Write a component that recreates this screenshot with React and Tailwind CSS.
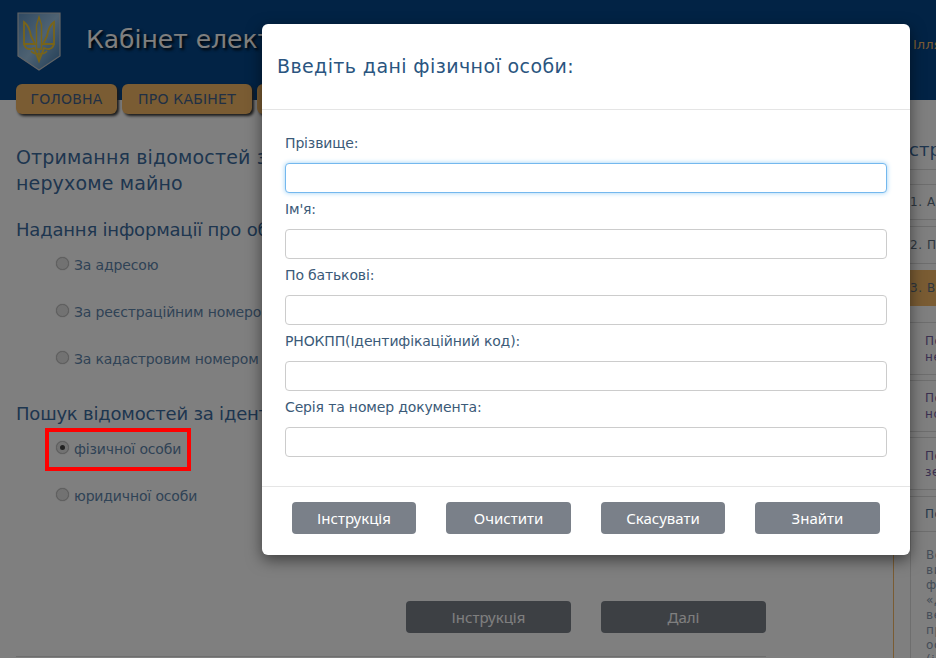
const Trident = () => (
  <svg width="44" height="59" viewBox="0 0 44 59" className="shrink-0">
    <defs>
      <linearGradient id="shield" x1="0" y1="0" x2="1" y2="1">
        <stop offset="0" stopColor="#5f93c4" />
        <stop offset="0.5" stopColor="#9cc4e4" />
        <stop offset="1" stopColor="#3f79ad" />
      </linearGradient>
    </defs>
    <path d="M1 1H43V44L22 58L1 44Z" fill="url(#shield)" stroke="#c4c8cc" strokeWidth="1.2" />
    <g fill="none" stroke="#f0c832" strokeWidth="1.8">
      <path d="M22 5L24.5 13V37H19.5V13Z" strokeWidth="1.4" />
      <path d="M7 10V32H18L14 24C13 18 11 13 7 10Z" />
      <path d="M37 10V32H26L30 24C31 18 33 13 37 10Z" />
      <path d="M7 32C9 39 15 37 17 36L22 49L27 36C29 37 35 39 37 32" />
      <path d="M14 39C17 43 27 43 30 39M22 37V49" strokeWidth="1.3" />
    </g>
  </svg>
)

const Radio = ({ checked }) => (
  <span className="w-[13px] h-[13px] -mt-[3px] rounded-full border border-[#c0c0c0] bg-[#e4e4e4] flex items-center justify-center shrink-0 shadow-[0_0_1px_#999]">
    {checked && <span className="w-[5px] h-[5px] rounded-full bg-[#444]" />}
  </span>
)

const RadioRow = ({ label, checked, className }) => (
  <div className={`flex items-center gap-[5px] pl-[56px] text-[14px] tracking-[-0.15px] text-[#5f86ac] ${className}`}>
    <Radio checked={checked} />
    <span className="whitespace-nowrap">{label}</span>
  </div>
)

const Field = ({ label, focused }) => (
  <div className="flex flex-col h-[66px]">
    <label className="h-[33px] pt-[3px] leading-[20px] text-[14px] tracking-[-0.15px] text-[#3b5a78]">{label}</label>
    <input
      className={`h-[30px] rounded-[4px] border bg-white ${
        focused ? 'border-[#74b8ee] shadow-[0_0_5px_#9bd0f5]' : 'border-[#ccc]'
      }`}
    />
  </div>
)

const ModalButton = ({ label, className }) => (
  <button className={`h-[32px] rounded-[4px] bg-[#7a8089] text-white text-[15px] font-['Noto_Sans',sans-serif] ${className}`}>
    {label}
  </button>
)

const tabs = [
  { label: 'ГОЛОВНА', width: 'w-[101px]' },
  { label: 'ПРО КАБІНЕТ', width: 'w-[130px]' },
  { label: 'ПОСЛУГИ', width: 'w-[100px]' },
]

// heights and gaps follow the strip visible to the right of the modal
const sideRows = [
  { lines: ['1. Авторизація'], box: 'h-[36px] mt-[14px] pl-[16px] text-[#5c6f80]' },
  { lines: ['2. Перевірка'], box: 'h-[38px] mt-[6px] pl-[16px] text-[#5c6f80]' },
  { lines: ['3. Вибір послуги'], box: 'h-[36px] mt-[6px] pl-[16px] bg-[#f4b866] border-[#f4b866] text-[#5c6f80]' },
  { lines: ['Пошук за адресою', 'нерухомого майна'], box: 'h-[53px] mt-[16px] pl-[31px] text-[#75609f]' },
  { lines: ['Пошук за реєстраційним', 'номером'], box: 'h-[52px] mt-[5px] pl-[31px] text-[#75609f]' },
  { lines: ['Пошук за кадастровим', 'земельної ділянки'], box: 'h-[53px] mt-[5px] pl-[31px] text-[#75609f]' },
  { lines: ['Пошук'], box: 'h-[36px] mt-[6px] pl-[31px] text-[#4a6f94]' },
]

const paragraph = ['Воно', 'визначає', 'фізичної', '«Далі»', 'веде', 'правa', 'особи', '(ідент']

export default function App() {
  return (
    <div className="relative w-[936px] h-[658px] overflow-hidden bg-white font-['DejaVu_Sans',sans-serif]">
      {/* Header */}
      <div className="h-[100px] bg-[#04468a] flex items-start pl-[17px] pt-[12px]">
        <Trident />
        <h1 className="ml-[25px] mt-[10px] text-[25px] leading-[36px] text-white whitespace-nowrap [text-shadow:2px_2px_3px_#000]">
          Кабінет електронних сервісів
        </h1>
        <span className="absolute left-[913px] top-[35px] text-[13px] text-[#f4b866]">Ілляшенко</span>
      </div>

      {/* Nav */}
      <div className="absolute left-[16px] top-[84px] flex gap-[5px]">
        {tabs.map(({ label, width }) => (
          <div
            key={label}
            className={`${width} h-[30px] flex items-center justify-center rounded-[6px] bg-[#f4b866] text-[14px] tracking-[0.2px] text-[#42618a] shadow-[2px_2px_3px_#333]`}
          >
            {label}
          </div>
        ))}
      </div>

      <div className="flex">
        {/* Main column */}
        <div className="w-[894px] shrink-0 pl-[16px] pt-[44px] border-r border-[#f4b866] h-[558px]">
          <h2 className="text-[19px] leading-[26px] tracking-[0.15px] text-[#3c6c9f] whitespace-nowrap">
            Отримання відомостей з реєстру прав на
            <br />
            нерухоме майно
          </h2>
          <h3 className="mt-[21px] text-[18px] leading-[26px] tracking-[-0.2px] text-[#3c6c9f] whitespace-nowrap">
            Надання інформації про об'єкт
          </h3>
          <div className="-ml-[16px]">
            <RadioRow className="mt-[10px] h-[24px]" label="За адресою" />
            <RadioRow className="mt-[23px] h-[24px]" label="За реєстраційним номером об'єкта" />
            <RadioRow className="mt-[23px] h-[24px]" label="За кадастровим номером земельної ділянки" />
          </div>
          <h3 className="mt-[30px] text-[18px] leading-[26px] tracking-[-0.2px] text-[#3c6c9f] whitespace-nowrap">
            Пошук відомостей за ідентифікатором
          </h3>
          <div className="-ml-[16px]">
            <div className="relative mt-[10px]">
              <RadioRow className="h-[24px]" label="фізичної особи" checked />
              <div className="absolute left-[45px] -top-[9px] w-[146px] h-[43px] border-[4px] border-[#ff0000] z-20" />
            </div>
            <RadioRow className="mt-[23px] h-[24px]" label="юридичної особи" />
          </div>
          <div className="mt-[93px] flex gap-[30px] pl-[390px]">
            <ModalButton className="w-[165px]" label="Інструкція" />
            <ModalButton className="w-[165px]" label="Далі" />
          </div>
          <div className="mt-[23px] w-[750px] border-t border-[#ddd]" />
        </div>

        {/* Sidebar */}
        <div className="w-[120px] shrink-0 pt-[36px] text-[12px] tracking-[0.6px]">
          <h3 className="h-[34px] leading-[28px] text-[18px] tracking-normal -ml-[2px] border-b border-[#ddd] whitespace-nowrap text-[#3c6c9f]">
            Інструкція
          </h3>
          {sideRows.map(({ lines, box }) => (
            <div key={lines[0]} className={`${box} flex flex-col justify-center border-y border-[#ddd] leading-[16px] whitespace-nowrap`}>
              {lines.map((line) => (
                <div key={line}>{line}</div>
              ))}
            </div>
          ))}
          <div className="ml-[16px] border-l border-[#ddd] pl-[15px] pt-[16px] h-[200px] leading-[15px] whitespace-nowrap text-[#8a9bb0]">
            {paragraph.map((line) => (
              <div key={line}>{line}</div>
            ))}
          </div>
        </div>
      </div>

      {/* Overlay and modal */}
      <div className="absolute inset-0 bg-black/50 pl-[262px] pt-[24px] z-10">
        <div className="w-[648px] h-[531px] rounded-[6px] bg-white shadow-[0_5px_15px_rgba(0,0,0,0.5)] flex flex-col">
          <div className="h-[86px] px-[15px] flex items-center border-b border-[#e5e5e5]">
            <h4 className="text-[19px] tracking-[0.4px] text-[#2a5580]">Введіть дані фізичної особи:</h4>
          </div>
          <div className="flex-1 px-[23px] pt-[20px]">
            <Field label="Прізвище:" focused />
            <Field label="Ім'я:" />
            <Field label="По батькові:" />
            <Field label="РНОКПП(Ідентифікаційний код):" />
            <Field label="Серія та номер документа:" />
          </div>
          <div className="h-[69px] border-t border-[#e5e5e5] pl-[30px] pt-[15px] flex gap-[30px] items-start">
            <ModalButton className="w-[124px]" label="Інструкція" />
            <ModalButton className="w-[125px]" label="Очистити" />
            <ModalButton className="w-[124px]" label="Скасувати" />
            <ModalButton className="w-[125px]" label="Знайти" />
          </div>
        </div>
      </div>
    </div>
  )
}
